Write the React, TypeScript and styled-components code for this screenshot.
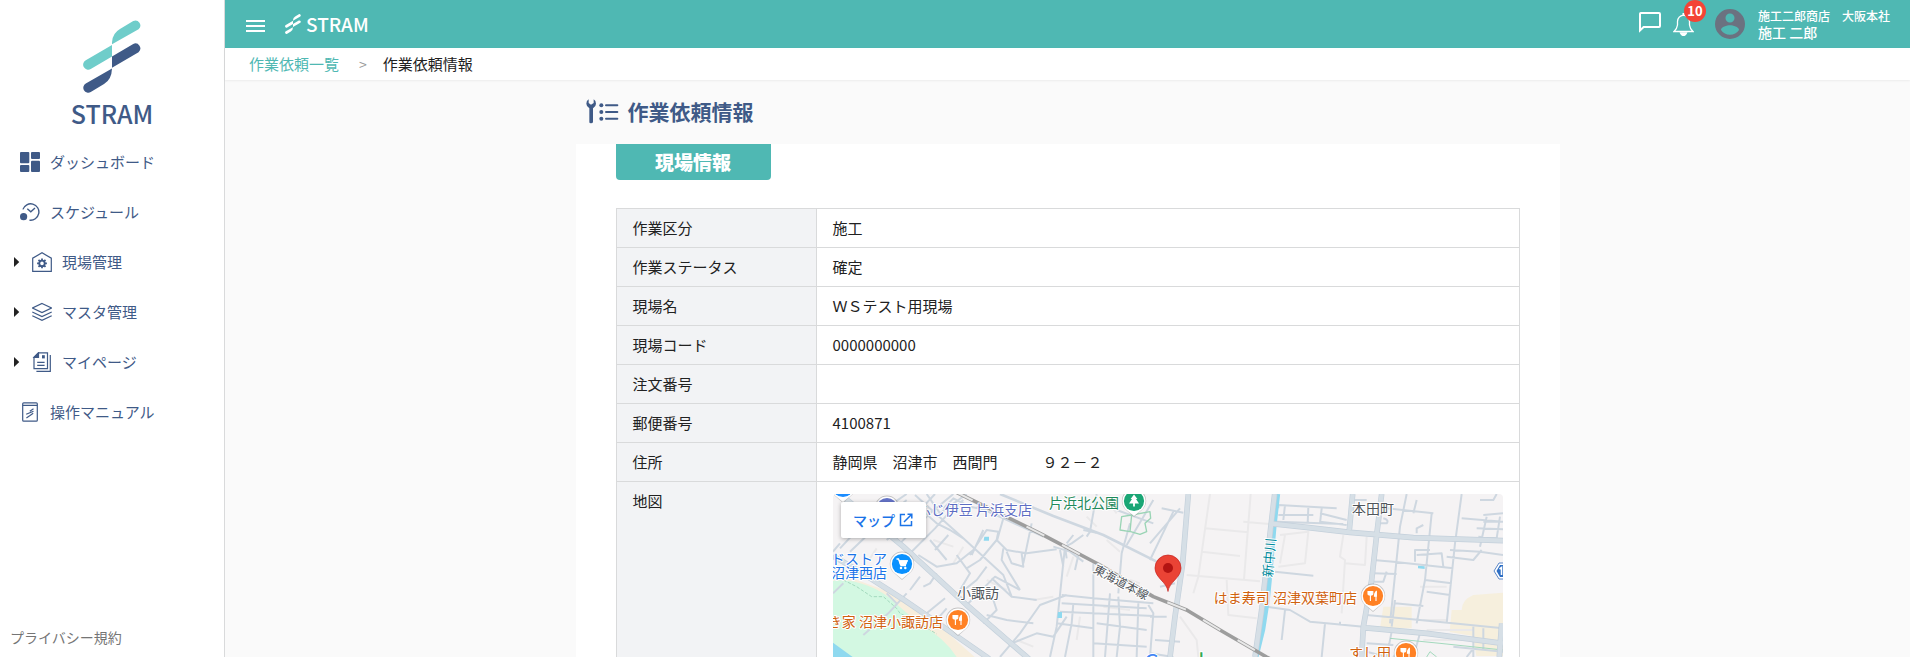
import React from "react";
import styled, { createGlobalStyle } from "styled-components";

const navy = "#3f5a87";
const teal = "#4fb8b3";
const lightTeal = "#6fcdca";
const line = "#d9dadb";

const GlobalStyle = createGlobalStyle`
  *, *::before, *::after { box-sizing: border-box; }
  body {
    margin: 0;
    background: #fafafa;
    color: #212121;
    font-family: "Noto Sans CJK JP", "Noto Sans", sans-serif;
    font-size: 15px;
    line-height: 22px;
  }
  a { color: inherit; text-decoration: none; }
  button { font: inherit; color: inherit; background: none; border: 0; padding: 0; cursor: pointer; }
  svg { display: block; flex: none; }
`;

const Shell = styled.div`
  display: flex;
  height: 100vh;
  overflow: hidden;
`;

const Sidebar = styled.aside`
  flex: 0 0 225px;
  display: flex;
  flex-direction: column;
  background: #fff;
  border-right: 1px solid ${line};
`;

const Brand = styled.a`
  display: flex;
  flex-direction: column;
  align-items: center;
  gap: 6px;
  padding-top: 20px;
  color: ${navy};
  font-size: 25px;
  line-height: 28px;
  font-weight: 500;
`;

const Menu = styled.ul`
  list-style: none;
  margin: 10px 0 0;
  padding: 0;
`;

const MenuLink = styled.a<{ $nested?: boolean }>`
  display: flex;
  align-items: center;
  gap: 10px;
  height: 50px;
  padding-left: ${(p) => (p.$nested ? 14 : 20)}px;
  color: ${navy};
`;

const Caret = styled.span`
  width: 8px;
  height: 10px;
  background: #222;
  clip-path: polygon(0 0, 66% 50%, 0 100%);
`;

const Privacy = styled.a`
  margin-top: auto;
  padding: 0 10px 9px;
  color: #757575;
  font-size: 14px;
`;

const Page = styled.div`
  flex: 1;
  min-width: 0;
  display: flex;
  flex-direction: column;
`;

const Header = styled.header`
  flex: none;
  display: flex;
  align-items: center;
  height: 48px;
  padding: 0 20px 0 21px;
  background: ${teal};
  color: #fff;
`;

const HeaderLogo = styled.a`
  display: flex;
  align-items: center;
  gap: 5px;
  margin: 0 auto 0 20px;
  font-size: 19px;
  font-weight: 500;
`;

const IconButton = styled.button`
  position: relative;
  display: flex;
  margin-right: 12px;
`;

const Badge = styled.span`
  position: absolute;
  left: 11px;
  top: -12px;
  width: 22px;
  height: 22px;
  border-radius: 50%;
  background: #f44336;
  font-size: 13px;
  font-weight: 700;
  text-align: center;
`;

const Account = styled.button`
  display: flex;
  align-items: center;
  gap: 13px;
  margin-left: 9px;
  text-align: left;
`;

const AccountLine = styled.span<{ $small?: boolean }>`
  display: block;
  font-size: ${(p) => (p.$small ? 12 : 14)}px;
  line-height: 16px;
  font-weight: 500;
  white-space: pre;
`;

const Crumbs = styled.nav`
  flex: none;
  display: flex;
  align-items: center;
  height: 32px;
  padding-left: 24px;
  background: #fff;
  box-shadow: 0 1px 2px rgba(0, 0, 0, 0.06);
  z-index: 1;
`;

const CrumbLink = styled.a`
  color: ${teal};
`;

const Separator = styled.span`
  margin: 0 16px 0 20px;
  color: #999;
  font-size: 14px;
`;

const Content = styled.main`
  flex: 1;
  min-height: 0;
  overflow-y: auto;
  scrollbar-width: none;
`;

const Column = styled.div`
  max-width: 984px;
  margin: 0 auto;
`;

const Title = styled.h1`
  display: flex;
  align-items: center;
  gap: 9px;
  height: 64px;
  margin: 0;
  padding: 0 0 2px 10px;
  color: ${navy};
  font-size: 21px;
  font-weight: 700;
`;

const Card = styled.section`
  padding: 0 40px 40px;
  background: #fff;
`;

const SectionLabel = styled.h2`
  width: 155px;
  margin: 0 0 28px;
  border-radius: 0 0 4px 4px;
  background: ${teal};
  color: #fff;
  font-size: 19px;
  line-height: 36px;
  font-weight: 900;
  text-align: center;
`;

const Table = styled.table`
  width: 100%;
  border-collapse: collapse;
  table-layout: fixed;
`;

const Label = styled.th`
  width: 200px;
  height: 39px;
  padding: 8px 16px;
  border: 1px solid ${line};
  background: #f2f3f5;
  font-weight: 400;
  text-align: left;
  vertical-align: top;
`;

const Value = styled.td<{ $map?: boolean }>`
  padding: ${(p) => (p.$map ? 12 : 8)}px 16px;
  border: 1px solid ${line};
  white-space: pre;
`;

const MapBox = styled.div`
  position: relative;
  height: 400px;
  border-radius: 4px;
  overflow: hidden;
`;

const MapButton = styled.a`
  position: absolute;
  left: 8px;
  top: 8px;
  display: flex;
  align-items: center;
  justify-content: center;
  gap: 4px;
  width: 85px;
  height: 36px;
  border-radius: 2px;
  background: #fff;
  box-shadow: 0 1px 4px rgba(0, 0, 0, 0.3);
  color: #1a73e8;
  font-size: 14px;
  font-weight: 500;
`;

function Mark({ width, height, top, bottom }: { width: number; height: number; top: string; bottom: string }) {
  return (
    <svg width={width} height={height} viewBox="249 59 174 220" aria-hidden="true">
      <g fill={top}>
        <path d="M336 132V126Q337 99 360 86L400 62A15 15 0 0 1 416 87Z" />
        <path d="M336 134L257 180A15 15 0 0 0 272 207L336 169Z" />
      </g>
      <g fill={bottom}>
        <path d="M336 169L400 131A15 15 0 0 1 416 156L336 203Z" />
        <path d="M336 205L257 250A15 15 0 0 0 272 276L312 252Q335 238 336 205Z" />
      </g>
    </svg>
  );
}

const iconProps = { width: 20, height: 20, viewBox: "0 0 20 20", fill: "none", stroke: navy, strokeWidth: 1.2, "aria-hidden": true } as const;

const DashboardIcon = () => (
  <svg {...iconProps} fill={navy} stroke="none">
    <rect width="9.3" height="11.3" rx="1" />
    <rect x="11" width="9" height="7" rx="1" />
    <rect y="13" width="9.3" height="7" rx="1" />
    <rect x="11" y="8.8" width="9" height="11.2" rx="1" />
  </svg>
);

const ScheduleIcon = () => (
  <svg {...iconProps} strokeWidth={1.4}>
    <path d="M2.9 7.4A8.2 8.2 0 1 1 9.4 18.1" />
    <path d="M7.3 6.7L10.8 9.7L15 6" />
    <circle cx="3.6" cy="14.7" r="3.6" fill={navy} stroke="none" />
  </svg>
);

const HouseGearIcon = () => (
  <svg {...iconProps}>
    <path d="M.7 19.3V6.2L10 .8l9.3 5.4v13.1z" />
    <circle cx="10" cy="11.4" r="2.700" strokeWidth="1.800" />
    <g strokeWidth="1.8">
      <path d="M10 6.5v2M10 14.3v2M5.1 11.4h2M12.9 11.4h2M6.5 7.9l1.5 1.5M12 13.4l1.5 1.5M13.5 7.9L12 9.4M8 13.4l-1.5 1.5" />
    </g>
  </svg>
);

const LayersIcon = () => (
  <svg {...iconProps}>
    <path d="M10 1.5L19.5 6 10 10.6.5 6z" />
    <path d="M.3 10L10 14.6 19.7 10M.3 13.8L10 18.4l9.7-4.6" />
  </svg>
);

const PagesIcon = () => (
  <svg {...iconProps}>
    <path d="M6.5.8H15.5V16.6H2V5.3z" />
    <path d="M2 5.3L6.5.8v4.5z" fill={navy} />
    <path d="M18.3 3v16.3H4.4M5.2 10.3h7.4M5.2 13.4h7.4" />
    <rect x="10" y="3.2" width="2.8" height="3.2" fill={navy} stroke="none" />
  </svg>
);

const ManualIcon = () => (
  <svg {...iconProps}>
    <rect x="2.7" y=".8" width="14.6" height="18.4" rx="1" />
    <path d="M2.7 3.4h14.6M9.8 9.2l3.7-2.5M6.2 12.2l7.3-3M6.4 15.9l3.6-2.4 3.2-2.3" />
  </svg>
);

const menu = [
  { label: "ダッシュボード", Icon: DashboardIcon },
  { label: "スケジュール", Icon: ScheduleIcon },
  { label: "現場管理", Icon: HouseGearIcon, nested: true },
  { label: "マスタ管理", Icon: LayersIcon, nested: true },
  { label: "マイページ", Icon: PagesIcon, nested: true },
  { label: "操作マニュアル", Icon: ManualIcon },
];

const rows = [
  ["作業区分", "施工"],
  ["作業ステータス", "確定"],
  ["現場名", "ＷＳテスト用現場"],
  ["現場コード", "0000000000"],
  ["注文番号", ""],
  ["郵便番号", "4100871"],
  ["住所", "静岡県　沼津市　西間門　　　９２－２"],
];

type PinKind = "food" | "shop" | "tree" | "plain";

function Pin({ x, y, color, kind }: { x: number; y: number; color: string; kind: PinKind }) {
  return (
    <g transform={`translate(${x} ${y})`}>
      <path d="M0 16L-9 8A12.2 12.2 0 1 1 9 8Z" fill="#8a8a8a" opacity=".45" />
      <path d="M0 15L-8.6 8A11.6 11.6 0 1 1 8.6 8Z" fill="#fff" />
      <circle r="10.1" fill={color} />
      {kind === "food" && (
        <path d="M-3.5-5v3.6M-1.6-5v3.6M-5-5v2.7q0 1.6 2.4 1.6T-.2-2.3V-5M-2.6-1V5M3-5V5M3.4-4.5Q1.2-3 1.4.3H3.4Z" fill="#fff" stroke="#fff" strokeWidth="1.1" />
      )}
      {kind === "shop" && (
        <g fill="none" stroke="#fff" strokeWidth="1.3">
          <path d="M-5.5-5h2L-1 1.5H4M-2.8-3H5L3.5.4H-1.5" />
          <path d="M-2.5-3H5L3.5.4H-1.5z" fill="#fff" />
          <circle cx="-1" cy="4" r=".6" />
          <circle cx="3.3" cy="4" r=".6" />
        </g>
      )}
      {kind === "tree" && <path d="M0-6.5L3.4-2H2L5 2.5H.9V5.5H-.9V2.5H-5L-2-2H-3.4Z" fill="#fff" />}
    </g>
  );
}

const MapText = styled.text<{ $color: string; $size?: number }>`
  fill: ${(p) => p.$color};
  font-size: ${(p) => p.$size ?? 14}px;
  stroke: #fff;
  stroke-width: 2px;
  stroke-linejoin: round;
  paint-order: stroke;
`;

const arterials =
  "M60 42L250 200 440 375 620 531 900 780M39 228L120 275 245 355 340 420 500 531 760 740M1105 42L1088 250 1065 410 1050 531M1364 42L1352 145 1335 300 1325 390 1305 531M1355 131L1460 142 1590 157 1780 173 2049 182M1685 42L1670 165 1655 300 1630 440 1625 531M1598 42L1588 150M1630 443L1820 460 2049 490M2045 430L2038 531";
const railway = "M395 30L660 160 840 255 1000 350 1100 390 1200 450 1340 531 1600 670";

function SiteMap() {
  return (
    <svg width="100%" height="100%" viewBox="0 0 670 400" preserveAspectRatio="xMidYMin slice" role="img" aria-label="現場周辺の地図">
      <rect width="670" height="400" fill="#f5f3f4" />
      <g transform="scale(.333333) translate(-39 -42)" fill="none" strokeLinejoin="round">
        <path d="M39 280L110 300 250 350 350 430 480 545 800 800H39Z" fill="#f7eedd" />
        <path d="M39 302Q90 296 140 316Q190 334 230 372Q260 400 310 440Q370 470 410 531L700 900H39Z" fill="#d3f8e2" />
        <path d="M39 488L98 531 500 900H39Z" fill="#8fd9ef" />
        <path d="M70 300L110 320 155 350 190 350 230 385 240 400 290 425 350 462" stroke="#a3d9bd" strokeWidth="3" strokeDasharray="10 5" />
        <g fill="#f6efdd">
          <path d="M1690 380h85v65h-95z" />
          <path d="M1895 390h30q0-30 35-45l89-7v190h-80l-10-60-70-12z" />
        </g>

        {/* faint footpaths and block outlines */}
        <g stroke="#eae9ea" strokeWidth="6">
          <path d="M1170 42L1135 290 1120 340M1155 145L1285 157M1145 215L1260 228M1100 285L1320 304M1292 42L1272 298M1270 125L1360 133M1380 165L1465 155 1455 250 1375 260M1380 250L1395 165M1570 165L1560 230 1575 240 1565 400M1640 170L1635 255 1575 250M1220 300L1225 405 1310 415M1080 410L1130 480 1135 531M1810 420H1880M1800 320H1880M1820 450H1960M1810 480H1950" />
          <path d="M340 180L400 200M270 150L320 110M430 200L400 250M500 300L560 330M640 360L700 350M800 110L830 140M860 60L890 100M860 180L900 215M760 230L740 290M780 410L770 480M850 380L930 390M930 300L960 310M590 480L640 500M170 205L150 235" />
        </g>

        {/* local streets */}
        <g stroke="#ced7e0" strokeWidth="6">
          <path d="M60 205L130 130 260 42M90 215L200 110M39 215L60 190M200 180L300 90 345 42M160 145L260 60M240 190L330 100 400 42M265 225L345 145 390 95 430 60M285 45L430 175 550 285 575 350M320 42L360 100 440 42M300 85L350 130 390 150 430 175M370 85L400 55 450 80 500 90M330 180L380 240M345 210L385 165M295 225L350 260 410 250 460 210M410 225L450 280 420 330M450 225L500 150 535 155 530 180 560 210 620 220 710 208M455 225L490 150M530 180L480 240 440 265M550 115L530 185M550 205L545 240 600 330M560 215L575 250 610 260 605 220M635 130L610 250M470 80L550 115 670 170M500 260L470 300 420 340M600 330L525 290 440 375M515 295L575 350 650 360" />
          <path d="M70 310L39 340M270 330L300 290M260 340L205 400 130 465M230 370L200 340M310 320L330 310 350 280M320 400L375 355M345 425L380 385M490 430L530 390 520 360M500 405L560 420 640 430M540 531L600 460 660 375 740 345M575 490L650 460 700 470 740 410M690 531L710 440 735 200M700 200L750 215 790 245M720 210L730 260M775 225L765 270M740 235L735 200 755 190 790 165M820 250L820 531M725 345L820 355 1000 370M725 370L980 385M720 395L1000 408M710 430L820 445M830 430L980 450M760 370L755 430 735 531M870 340L855 531M895 350L900 440 890 531M955 370L950 531M985 375L1000 400 990 531M820 490L980 500" />
          <path d="M830 42L810 155 800 170M930 130L905 220 895 340M1000 60L920 195M890 90L1000 130M790 150L830 158M760 165L740 190M1080 85L990 190M1060 95L990 240M1040 410H990M1025 85L1090 98M1005 480L1080 485M990 520L1060 531M1020 320L1065 310" />
          <path d="M1375 85L1375 75 1550 85M1375 105H1480M1370 125L1570 132M1395 75L1390 120M1465 82L1463 130M1505 85L1500 130M1500 100L1580 120M1500 125L1580 135M1590 60H1640M1700 85L1840 100M1760 42L1740 140 1710 430M1835 100L1815 300 1790 430M1790 60L1780 100M1670 130H1700Q1708 120 1690 115M1790 160V145L1810 135M1660 240L1720 245 1900 265M1785 245V210H1830M1790 225L1865 220 1870 260M1925 115L2049 125M1925 42L1905 190 1880 430M1990 105L2049 100M1990 125H2049M2000 110L1980 200M1970 145L2049 148M1975 170L2030 175 2040 110M1890 210L1980 215 2049 225M1880 230L1960 240 1985 210M1980 60H2020L2030 42M1660 280L1730 282M1660 305H1690L1700 275M1815 300L1895 310M1820 335L1890 345M1725 370L1810 378M1640 405L1800 420 2049 445M1725 360L1715 440M1340 380L1410 390 1470 425 1520 430 1630 440M1395 390L1385 480M1515 430L1505 531M1365 275L1480 287M1560 425V435M1640 490L1720 495M1640 515L1700 531M1715 455L1700 531M1740 500L1720 531M1800 460L1780 531M1960 440V531M1990 445V510M1900 500L2049 515M1960 505L1940 531" />
        </g>
        <path d="M1710 475L1860 490 2049 510M1820 531L1830 515 1850 531" stroke="#a3d9bd" strokeWidth="3" />
        <path d="M905 110L935 105 930 155 900 150ZM935 105L990 95 992 115 975 130 980 155 960 163 932 155" stroke="#9ad4b5" strokeWidth="4" />

        {/* river and ponds */}
        <path d="M1373 42L1362 140 1348 300 1342 360 1328 450 1308 531 1240 900" stroke="#8fd9ef" strokeWidth="15" />
        <path d="M493 170h14v12h-16zM714 396h12v18h-14zM1794 257l20 2v8l-20-2z" fill="#8fd9ef" />

        <path d={arterials} stroke="#c4d0db" strokeWidth="17" />
        <path d={arterials} stroke="#d6dfe6" strokeWidth="13" />
        <path d="M540 42L700 108 850 165 1010 245" stroke="#ced7e0" strokeWidth="8" />

        <path d={railway} stroke="#9d9d9d" strokeWidth="11" />
        <path d={railway} stroke="#e8e8e8" strokeWidth="6" strokeDasharray="60 60" strokeDashoffset="-10" />
      </g>

      <Pin x={10} y={-7} color="#1a8cff" kind="plain" />
      <Pin x={54} y={14} color="#6574c9" kind="plain" />
      <Pin x={69} y={70} color="#0a91ff" kind="shop" />
      <Pin x={125} y={126} color="#ff8124" kind="food" />
      <Pin x={301} y={7} color="#1aa675" kind="tree" />
      <Pin x={540} y={102} color="#ff8124" kind="food" />
      <Pin x={573} y={159} color="#ff8124" kind="food" />

      {/* route shield */}
      <path d="M661 77L666 69H676V85H666Z" fill="#fff" stroke="#5c87c8" strokeWidth="1" />
      <path d="M663.5 77L667 71H676V83H667Z" fill="#2f6fc4" />
      <path d="M666.5 75L668.5 73.500V81" fill="none" stroke="#fff" strokeWidth="1.600" />

      <MapText $color="#5d6dc3" x="199" y="21" textAnchor="end">ふじ伊豆 片浜支店</MapText>
      <MapText $color="#1f8a5b" x="286" y="14" textAnchor="end">片浜北公園</MapText>
      <MapText $color="#1a73e8" x="54" y="70" textAnchor="end">ドストア</MapText>
      <MapText $color="#1a73e8" x="54" y="84" textAnchor="end">沼津西店</MapText>
      <MapText $color="#50555b" x="124" y="104">小諏訪</MapText>
      <MapText $color="#d0620f" x="110" y="133" textAnchor="end">き家 沼津小諏訪店</MapText>
      <MapText $color="#50555b" x="519" y="20">本田町</MapText>
      <MapText $color="#d0620f" x="524" y="109" textAnchor="end">はま寿司 沼津双葉町店</MapText>
      <MapText $color="#d0620f" x="558" y="164" textAnchor="end">すし田</MapText>
      <MapText $color="#50555b" $size={12} textAnchor="middle" transform="translate(286 92) rotate(28)">東海道本線</MapText>
      <MapText $color="#008a9c" $size={13} textAnchor="middle" transform="translate(441 64) rotate(-85)">新中川</MapText>

      <path d="M335 97.5C334 88 322 84 322 74A13 13 0 0 1 348 74C348 84 336 88 335 97.5Z" fill="#ea4335" stroke="#c5221f" strokeWidth=".7" />
      <circle cx="335" cy="74" r="5" fill="#b31412" />

      <MapText $color="#4285f4" $size={22} x="311" y="176">
        G<tspan fill="#ea4335">o</tspan><tspan fill="#fbbc04">o</tspan>g<tspan fill="#34a853">l</tspan><tspan fill="#ea4335">e</tspan>
      </MapText>
    </svg>
  );
}

export default function App() {
  return (
    <>
      <GlobalStyle />
      <Shell>
        <Sidebar>
          <Brand href="#">
            <Mark width={58} height={73} top={lightTeal} bottom={navy} />
            STRAM
          </Brand>
          <Menu>
            {menu.map(({ label, Icon, nested }) => (
              <li key={label}>
                <MenuLink href="#" $nested={nested}>
                  {nested && <Caret />}
                  <Icon />
                  {label}
                </MenuLink>
              </li>
            ))}
          </Menu>
          <Privacy href="#">プライバシー規約</Privacy>
        </Sidebar>

        <Page>
          <Header>
            <button aria-label="メニュー">
              <svg width="19" height="20" viewBox="0 0 19 20" stroke="#fff" strokeWidth="2">
                <path d="M0 7h19M0 12h19M0 17h19" />
              </svg>
            </button>
            <HeaderLogo href="#">
              <Mark width={16} height={20} top="#fff" bottom="#fff" />
              STRAM
            </HeaderLogo>
            <IconButton aria-label="メッセージ">
              <svg width="22" height="24" viewBox="0 0 22 24" fill="none" stroke="#fff" strokeWidth="2">
                <path d="M1 18.500V1.800Q1 1 1.800 1H20Q21 1 21 2V14Q21 15 20 15H4.600Z" />
              </svg>
            </IconButton>
            <IconButton aria-label="通知 10件">
              <svg width="21" height="24" viewBox="0 0 21 24" fill="none" stroke="#fff" strokeWidth="1.3">
                <path d="M1 19.5H20Q17 17 16.5 13V9.5Q16 4 10.5 3.2Q5 4 4.5 9.5V13Q4 17 1 19.5Z" />
                <path d="M10.5 1v2" strokeWidth="2" />
                <path d="M7.5 21h6Q12.5 23.5 10.5 23.5T7.5 21Z" fill="#fff" />
              </svg>
              <Badge>10</Badge>
            </IconButton>
            <Account>
              <svg width="30" height="30" viewBox="2 2 20 20" fill="#6b7280" aria-hidden="true">
                <path d="M12 2a10 10 0 1 0 0 20 10 10 0 0 0 0-20zm0 3a3 3 0 1 1 0 6 3 3 0 0 1 0-6zm0 14.2a7.2 7.2 0 0 1-6-3.22c.03-1.99 4-3.08 6-3.08s5.97 1.09 6 3.08a7.2 7.2 0 0 1-6 3.22z" />
              </svg>
              <span>
                <AccountLine $small>施工二郎商店　大阪本社</AccountLine>
                <AccountLine>施工 二郎</AccountLine>
              </span>
            </Account>
          </Header>

          <Crumbs aria-label="パンくず">
            <CrumbLink href="#">作業依頼一覧</CrumbLink>
            <Separator>&gt;</Separator>
            <span>作業依頼情報</span>
          </Crumbs>

          <Content>
            <Column>
              <Title>
                <svg width="33" height="25" viewBox="77 59 99 75" aria-hidden="true">
                  <path d="M85 60V71L92 76 100 71V60Q107 64 107 73 107 81 98 87V127Q98 132 92 132T87 127V87Q78 81 78 73 78 64 85 60Z" fill={navy} />
                  <g fill={navy}>
                    <circle cx="123" cy="78" r="6" />
                    <circle cx="123" cy="98" r="6" />
                    <circle cx="123" cy="118" r="6" />
                  </g>
                  <path d="M137 78H171M137 98H171M137 118H171" stroke={navy} strokeWidth="6" strokeLinecap="round" />
                </svg>
                作業依頼情報
              </Title>
              <Card>
                <SectionLabel>現場情報</SectionLabel>
                <Table>
                  <tbody>
                    {rows.map(([label, value]) => (
                      <tr key={label}>
                        <Label scope="row">{label}</Label>
                        <Value>{value}</Value>
                      </tr>
                    ))}
                    <tr>
                      <Label scope="row">地図</Label>
                      <Value $map>
                        <MapBox>
                          <SiteMap />
                          <MapButton href="#">
                            マップ
                            <svg width="14" height="14" viewBox="0 0 14 14" fill="none" stroke="#1a73e8" strokeWidth="1.5" aria-hidden="true">
                              <path d="M6 1.5H1.5V12.5H12.5V8M8.5 1.2H12.8V5.5M12.5 1.5L5 9" />
                            </svg>
                          </MapButton>
                        </MapBox>
                      </Value>
                    </tr>
                  </tbody>
                </Table>
              </Card>
            </Column>
          </Content>
        </Page>
      </Shell>
    </>
  );
}
